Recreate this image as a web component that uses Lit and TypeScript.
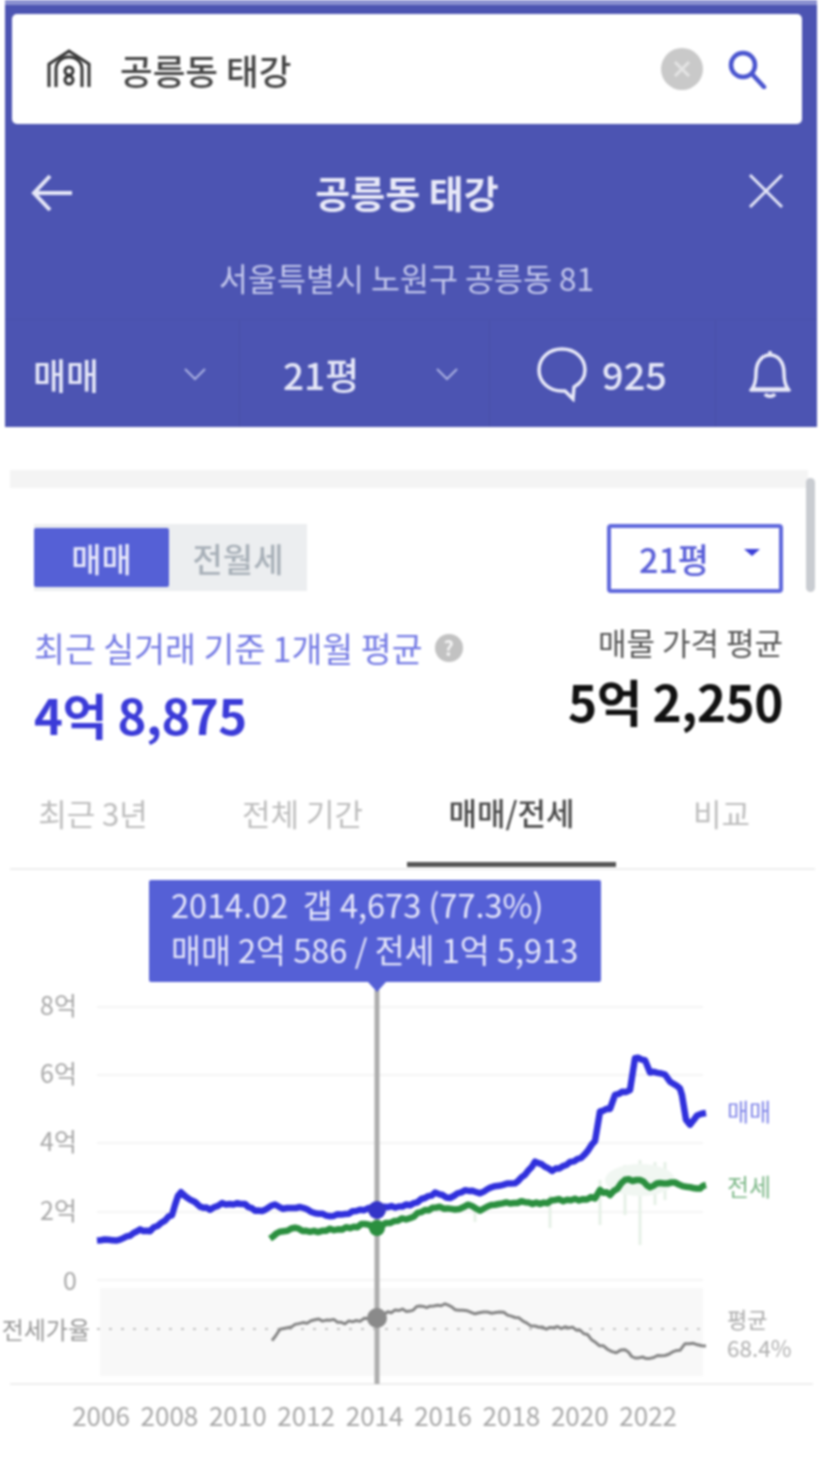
import { LitElement, html, css, svg } from "lit";
import { customElement } from "lit/decorators.js";

const wobble = (a: number[][], amp: number) => {
  const out: number[][] = [];
  let k = 0;
  for (let i = 0; i < a.length - 1; i++) {
    const [x0, y0] = a[i];
    const [x1, y1] = a[i + 1];
    const n = Math.max(1, Math.round((x1 - x0) / 4));
    for (let j = 0; j < n; j++) {
      const t = j / n;
      k++;
      out.push([x0 + (x1 - x0) * t, y0 + (y1 - y0) * t + Math.sin(k * 2.3) * Math.cos(k * 0.9) * amp]);
    }
  }
  out.push(a[a.length - 1]);
  return out.map((p) => `${p[0].toFixed(1)},${p[1].toFixed(1)}`).join(" ");
};
const blue = [[97,1240],[120,1240],[130,1235],[140,1230],[150,1231],[165,1220],[172,1215],[178,1195],[181,1193],[190,1200],[195,1201],[200,1207],[210,1209],[222,1204],[245,1204],[255,1211],[265,1210],[275,1204],[283,1209],[300,1207],[315,1213],[330,1216],[345,1214],[360,1210],[377,1207],[395,1207],[410,1205],[425,1198],[435,1193],[450,1198],[465,1190],[480,1193],[495,1186],[515,1183],[525,1175],[535,1162],[545,1166],[552,1171],[570,1163],[585,1155],[595,1140],[600,1112],[610,1108],[615,1095],[630,1090],[635,1058],[645,1060],[650,1072],[665,1074],[670,1082],[680,1088],[682,1095],[686,1120],[690,1125],[697,1115],[706,1113]];
const green = [[270,1238],[280,1232],[295,1228],[310,1232],[330,1230],[350,1228],[365,1224],[377,1228],[390,1222],[410,1218],[425,1210],[440,1207],[455,1210],[468,1205],[480,1210],[495,1204],[510,1203],[525,1202],[540,1204],[555,1200],[575,1200],[595,1198],[600,1190],[610,1195],[625,1180],[640,1180],[650,1187],[660,1183],[675,1183],[690,1188],[700,1188],[706,1185]];
const gray = [[272,1340],[280,1330],[295,1325],[315,1320],[330,1320],[345,1323],[360,1320],[377,1317],[395,1310],[410,1311],[420,1306],[430,1307],[445,1304],[455,1309],[475,1313],[500,1312],[515,1317],[535,1327],[550,1328],[565,1327],[580,1330],[595,1342],[612,1352],[625,1350],[635,1358],[650,1358],[665,1355],[680,1350],[685,1343],[706,1346]];
const noise = [[600,1180,600,1225],[625,1165,625,1215],[640,1160,640,1245],[655,1162,655,1205],[665,1162,665,1200],[550,1195,550,1228],[475,1205,475,1222]];
const years = [2006,2008,2010,2012,2014,2016,2018,2020,2022];
const yLabels: [string, number][] = [["8억",1007],["6억",1075],["4억",1143],["2억",1212]];

@customElement("app-root")
export class AppRoot extends LitElement {
  static styles = css`
    :host { display: block; width: 827px; height: 1462px; overflow: hidden; background: #fff; filter: blur(1.1px);
      font-family: "Noto Sans CJK KR", "Noto Sans", sans-serif; }
    * { box-sizing: border-box; }
    .header { margin: 0 10px 0 5px; height: 427px; background: #4c54b2; border-top: 5px solid #8a90d0; padding: 9px 15px 0 7px; color: #fff; display: flex; flex-direction: column; }
    .search { height: 110px; background: #fff; border-radius: 5px; display: flex; align-items: center; padding: 0 35px 0 34px; flex: none; }
    .search .q { margin-left: 28px; font-size: 35.5px; font-weight: 500; color: #444; flex: 1; }
    .clear { margin-right: 24px; display: block; }
    .nav { height: 138px; flex: none; display: flex; align-items: center; justify-content: space-between; padding: 0 18px 0 19px; }
    .nav .t { font-size: 38px; font-weight: 700; color: #e8e9f8; margin: -4px 7px 0 0; }
    .nav .x { margin-top: -4px; }
    .addr { height: 40px; margin-top: -5px; text-align: center; font-size: 31.5px; line-height: 40px; color: #c4c8ec; flex: none; margin-right: 1px; }
    .bar { margin: 22px -15px 0 -7px; flex: 1; display: grid; grid-template-columns: 235px 250px 226px 1fr; border-top: 1px solid #4a51ab; }
    .cell { display: flex; align-items: center; border-right: 1px solid #484fa8; color: #e4e6f7; }
    .cell:last-child { border: 0; justify-content: center; padding-left: 6px; }
    .c1 { padding: 0 32px 0 28px; justify-content: space-between; font-size: 36px; font-weight: 500; }
    .c2 { padding: 0 30px 0 43px; justify-content: space-between; font-size: 37px; font-weight: 500; }
    .c3 { padding-left: 46px; gap: 14px; font-size: 38px; font-weight: 500; }
    .strip { margin: 43px 19px 0 10px; height: 18px; background: #f4f4f4; }
    .scroll { position: absolute; left: 806px; top: 478px; width: 9px; height: 114px; background: #c9ccd1; border-radius: 5px; }
    .top { height: 292px; padding: 36px 44px 0 34px; display: grid; grid-template-columns: 1fr auto; grid-template-rows: 69px auto; align-content: start; }
    .seg { display: flex; width: 273px; height: 67px; background: #eceef0; align-items: center; font-size: 33px; font-weight: 500; }
    .seg .on { width: 135px; height: 59px; background: #5560d6; color: #e8e9fb; display: flex; align-items: center; justify-content: center; border-radius: 2px; }
    .seg .off { flex: 1; text-align: center; color: #a8b0b8; }
    .drop { justify-self: end; width: 176px; height: 69px; border: 4px solid #5f67dc; border-radius: 4px; display: flex; align-items: center; padding: 0 19px 0 28px; justify-content: space-between; color: #5a5fd8; font-size: 34px; font-weight: 500; }
    .caret { width: 0; height: 0; border: 8px solid transparent; border-top: 7px solid #3b3fd8; border-bottom: 0; margin-top: -12px; }
    .l { display: flex; flex-direction: column; margin-top: 32px; align-items: flex-start; }
    .lab { display: flex; align-items: center; gap: 12px; font-size: 33.6px; line-height: 46px; color: #7379e4; white-space: nowrap; }
    .help { width: 28px; height: 28px; border-radius: 50%; background: #c2c2c2; color: #f4f4f4; font-size: 20px; display: flex; align-items: center; justify-content: center; line-height: 1; font-weight: 700; }
    .v1 { margin-top: 10px; font-size: 49px; font-weight: 700; line-height: 66px; color: #3b3bd8; white-space: nowrap; letter-spacing: -0.5px; }
    .r { display: flex; flex-direction: column; margin-top: 28px; align-items: flex-end; }
    .lab2 { font-size: 31px; line-height: 42px; color: #555; white-space: nowrap; }
    .v2 { margin-top: 5px; font-size: 49.5px; font-weight: 700; line-height: 66px; color: #111; white-space: nowrap; letter-spacing: -0.5px; }
    .tabs { margin: -5px 12px 0 10px; height: 95px; display: grid; grid-template-columns: 188px 209px 209px 1fr; border-bottom: 2px solid #eee; font-size: 31px; color: #bdbdbd; }
    .tab { display: flex; align-items: center; justify-content: center; padding-bottom: 19px; }
    .tab:first-child { padding-right: 22px; }
    .tab:last-child { padding-left: 12px; }
    .tab.on { color: #4a4a4a; font-weight: 500; border-bottom: 5px solid #555; padding-bottom: 14px; height: 92px; }
    .chart { position: relative; height: 592px; }
    .chart svg { display: block; font-family: "Noto Sans CJK KR", "Noto Sans", sans-serif; }
    .tip { position: absolute; left: 149px; top: 10px; width: 452px; height: 102px; background: #5560d6; border-radius: 2px; color: #e6e7fa; font-size: 32.5px; line-height: 45px; padding: 1px 0 0 22px; white-space: nowrap; }
    .tip::after { content: ""; position: absolute; left: 219px; bottom: -10px; border: 9px solid transparent; border-top: 10px solid #5560d6; border-bottom: 0; }
  `;

  render() {
    return html`
      <div class="header">
        <div class="search">
          <svg width="46" height="40" viewBox="0 0 46 40" fill="none" stroke="#333" stroke-width="3"><path d="M3 38V15L23 2l20 13v23"/><path d="M10 38V20a13 12 0 0 1 26 0v18"/><circle cx="23" cy="22" r="4"/><circle cx="23" cy="31" r="4"/></svg>
          <span class="q">공릉동 태강</span>
          <svg class="clear" width="42" height="42" viewBox="0 0 42 42"><circle cx="21" cy="21" r="21" fill="#c9c9c9"/><path d="M14 14l14 14M28 14L14 28" stroke="#e4e4e4" stroke-width="3"/></svg>
          <svg width="40" height="40" viewBox="0 0 40 40" fill="none" stroke="#4a55cf" stroke-width="4.5"><circle cx="16" cy="16" r="12"/><path d="M25 25l12 13" stroke-linecap="round"/></svg>
        </div>
        <div class="nav">
          <svg width="42" height="38" viewBox="0 0 42 38" fill="none" stroke="#e4e6f7" stroke-width="4"><path d="M19 2L3 19l16 17M3 19h38"/></svg>
          <span class="t">공릉동 태강</span>
          <svg class="x" width="36" height="36" viewBox="0 0 36 36" stroke="#e4e6f7" stroke-width="3"><path d="M2 2l32 32M34 2L2 34"/></svg>
        </div>
        <div class="addr">서울특별시 노원구 공릉동 81</div>
        <div class="bar">
          <div class="cell c1"><span>매매</span><svg width="24" height="14" viewBox="0 0 24 14" fill="none" stroke="#aab0e2" stroke-width="2"><path d="M2 2l10 10L22 2"/></svg></div>
          <div class="cell c2"><span>21평</span><svg width="24" height="14" viewBox="0 0 24 14" fill="none" stroke="#aab0e2" stroke-width="2"><path d="M2 2l10 10L22 2"/></svg></div>
          <div class="cell c3">
            <svg width="52" height="56" viewBox="0 0 52 56" fill="none" stroke="#e8e9f8" stroke-width="3.5"><path d="M26 3C13 3 3 12 3 24s10 21 23 21h3l8 8 1-12c7-4 11-10 11-17C49 12 39 3 26 3z"/></svg>
            <span>925</span>
          </div>
          <div class="cell">
            <svg width="44" height="50" viewBox="0 0 44 50" fill="none" stroke="#e8e9f8" stroke-width="3.5"><path d="M4 40c3-4 4-8 4-16C8 13 14 6 22 6s14 7 14 18c0 8 1 12 4 16z"/><path d="M2 41h40M22 2v4M17 45c2 3 8 3 10 0"/></svg>
          </div>
        </div>
      </div>
      <div class="strip"></div>
      <div class="scroll"></div>
      <div class="top">
        <div class="seg"><div class="on">매매</div><div class="off">전월세</div></div>
        <div class="drop"><span>21평</span><span class="caret"></span></div>
        <div class="l">
          <div class="lab"><span>최근 실거래 기준 1개월 평균</span><span class="help">?</span></div>
          <div class="v1">4억 8,875</div>
        </div>
        <div class="r">
          <div class="lab2">매물 가격 평균</div>
          <div class="v2">5억 2,250</div>
        </div>
      </div>
      <div class="tabs">
        <div class="tab">최근 3년</div><div class="tab">전체 기간</div><div class="tab on">매매/전세</div><div class="tab">비교</div>
      </div>
      <div class="chart">
        <svg width="827" height="592" viewBox="0 870 827 592">
          ${[1007,1075,1143,1212,1280].map((y) => svg`<line x1="97" x2="703" y1=${y} y2=${y} stroke="#f4f4f4" stroke-width="2"/>`)}
          <rect x="100" y="1288" width="603" height="88" fill="#f8f8f8"/>
          <line x1="97" x2="708" y1="1329" y2="1329" stroke="#c4c4c4" stroke-width="2" stroke-dasharray="3 9"/>
          <line x1="10" x2="813" y1="1384" y2="1384" stroke="#eee" stroke-width="2"/>
          ${noise.map((n) => svg`<line x1=${n[0]} y1=${n[1]} x2=${n[2]} y2=${n[3]} stroke="#e6f1e7" stroke-width="3"/>`)}
          <ellipse cx="640" cy="1180" rx="35" ry="16" fill="#f1f7f2"/>
          <line x1="377" x2="377" y1="990" y2="1384" stroke="#adadad" stroke-width="5"/>
          <polyline points=${wobble(green, 1.3)} fill="none" stroke="#2b8f3f" stroke-width="6.5" stroke-linejoin="round"/>
          <polyline points=${wobble(blue, 1)} fill="none" stroke="#3030dc" stroke-width="6.5" stroke-linejoin="round"/>
          <polyline points=${wobble(gray, 1.5)} fill="none" stroke="#858585" stroke-width="3" stroke-linejoin="round"/>
          <circle cx="377" cy="1210" r="9" fill="#3434c8"/>
          <circle cx="377" cy="1228" r="8" fill="#2b8f3f"/>
          <circle cx="377" cy="1318" r="10" fill="#8a8a8a"/>
          <g font-size="25" fill="#a8a8a8" text-anchor="end">
            ${yLabels.map(([t, y]) => svg`<text x="77" y=${y + 8}>${t}</text>`)}
            <text x="77" y="1290">0</text>
            <text x="90" y="1339" fill="#999" font-size="24">전세가율</text>
          </g>
          <text x="727" y="1121" font-size="24" fill="#8085e8">매매</text>
          <text x="727" y="1196" font-size="24" fill="#7fb98a">전세</text>
          <text x="727" y="1328" font-size="22" fill="#aaa">평균</text>
          <text x="727" y="1357" font-size="22.5" fill="#b0b0b0">68.4%</text>
          <g font-size="26" fill="#a8a8a8" text-anchor="middle">
            ${years.map((y, i) => svg`<text x=${101 + i * 68.4} y="1426">${y}</text>`)}
          </g>
        </svg>
        <div class="tip">2014.02 &nbsp;갭 4,673 (77.3%)<br />매매 2억 586 / 전세 1억 5,913</div>
      </div>
    `;
  }
}
